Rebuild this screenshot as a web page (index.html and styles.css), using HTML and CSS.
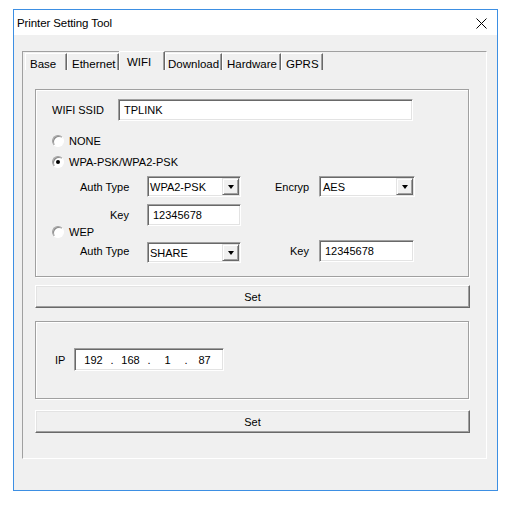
FILE: index.html
```html
<!DOCTYPE html>
<html>
<head>
<meta charset="utf-8">
<title>Printer Setting Tool</title>
<link rel="stylesheet" href="styles.css">
</head>
<body>
<div class="window">
  <div class="titlebar">
    <span class="title">Printer Setting Tool</span>
    <svg class="close" width="11" height="11" viewBox="0 0 11 11"><path d="M0.5 0.5 L10.5 10.5 M10.5 0.5 L0.5 10.5" stroke="#000" stroke-width="1" fill="none"/></svg>
  </div>
  <div class="client">
    <div class="tabctl">
      <div class="tabs">
        <div class="tab w-base">Base</div>
        <div class="tab w-eth">Ethernet</div>
        <div class="tab w-wifi active">WIFI</div>
        <div class="tab w-dl">Download</div>
        <div class="tab w-hw">Hardware</div>
        <div class="tab w-gprs">GPRS</div>
      </div>
      <div class="page">
        <div class="group g1">
          <div class="row r-ssid">
            <span class="lbl l-ssid">WIFI SSID</span>
            <div class="edit e-ssid">TPLINK</div>
          </div>
          <div class="row radio-row r-none">
            <span class="radio"></span><span class="rtext">NONE</span>
          </div>
          <div class="row radio-row r-wpa">
            <span class="radio checked"></span><span class="rtext">WPA-PSK/WPA2-PSK</span>
          </div>
          <div class="row r-auth1">
            <span class="lbl l-auth">Auth Type</span>
            <div class="combo c-left"><span class="ctext">WPA2-PSK</span><span class="dd"><span class="tri"></span></span></div>
            <span class="lbl l-enc">Encryp</span>
            <div class="combo c-right"><span class="ctext">AES</span><span class="dd"><span class="tri"></span></span></div>
          </div>
          <div class="row r-key1">
            <span class="lbl l-key">Key</span>
            <div class="edit e-key">12345678</div>
          </div>
          <div class="row radio-row r-wep">
            <span class="radio"></span><span class="rtext">WEP</span>
          </div>
          <div class="row r-auth2">
            <span class="lbl l-auth">Auth Type</span>
            <div class="combo c-left c-low"><span class="ctext">SHARE</span><span class="dd"><span class="tri"></span></span></div>
            <span class="lbl l-key2">Key</span>
            <div class="edit e-key2">12345678</div>
          </div>
        </div>
        <div class="btn b1">Set</div>
        <div class="group g2">
          <div class="row r-ip">
            <span class="lbl l-ip">IP</span>
            <div class="ipfield">
              <span class="oct">192</span><span class="dot">.</span><span class="oct">168</span><span class="dot">.</span><span class="oct">1</span><span class="dot">.</span><span class="oct">87</span>
            </div>
          </div>
        </div>
        <div class="btn b2">Set</div>
      </div>
    </div>
  </div>
</div>
</body>
</html>
```

FILE: styles.css
```css
html, body {
  margin: 0;
  padding: 0;
  background: #ffffff;
}
body {
  font-family: "Liberation Sans", Arial, sans-serif;
  font-size: 11px;
  color: #000;
}
.window {
  margin: 9px 0 0 13px;
  width: 485px;
  height: 482px;
  box-sizing: border-box;
  border: 1px solid #3d8fe3;
  background: #f0f0f0;
  display: flex;
  flex-direction: column;
}
.titlebar {
  height: 25px;
  flex: none;
  background: #fff;
  display: flex;
  align-items: center;
  justify-content: space-between;
  padding: 0 10px 0 3px;
}
.title {
  font-size: 11.5px;
  letter-spacing: -0.1px;
}
.close {
  display: block;
  margin-top: 1px;
}
.client {
  padding: 16px 0 0 8px;
}
.tabctl {
  width: 465px;
  height: 408px;
  box-sizing: border-box;
  border: 1px solid;
  border-color: #a0a0a0 #ffffff #ffffff #a0a0a0;
}
.tabs {
  display: flex;
  align-items: flex-end;
  height: 17px;
  margin-top: 1px;
  padding-left: 2px;
}
.tab {
  height: 17px;
  box-sizing: border-box;
  border-top: 1px solid #fff;
  border-left: 1px solid #fff;
  border-right: 1px solid #696969;
  box-shadow: inset -1px 0 0 #a0a0a0;
  padding: 3px 0 0 4px;
  line-height: 14px;
  font-size: 11.5px;
  white-space: nowrap;
  overflow: hidden;
}
.tab.active {
  height: 19px;
  padding-left: 7px;
}
.w-base { width: 42px; }
.w-eth { width: 52px; }
.w-wifi { width: 46px; }
.w-dl { width: 57px; padding-left: 2px; }
.w-hw { width: 59px; }
.w-gprs { width: 42px; }
.page {
  padding: 19px 0 0 12px;
}
.group {
  width: 434px;
  box-sizing: border-box;
  border: 1px solid #a0a0a0;
  box-shadow: inset 1px 1px 0 #fff, 1px 1px 0 #fff;
}
.g1 { height: 188px; }
.g2 { height: 78px; margin-top: 13px; }
.row {
  display: flex;
  align-items: center;
}
.lbl { flex: none; white-space: nowrap; }
.edit, .combo, .ipfield {
  box-sizing: border-box;
  background: #fff;
  border: 1px solid;
  border-color: #a0a0a0 #ffffff #ffffff #a0a0a0;
  box-shadow: inset 1px 1px 0 #696969, inset -1px -1px 0 #e3e3e3;
}
.edit {
  height: 22px;
  padding: 3px 0 0 5px;
  line-height: 14px;
}
.r-ssid { margin-top: 9px; height: 22px; padding-left: 16px; }
.l-ssid { width: 66px; }
.e-ssid { width: 295px; }
.radio-row { height: 14px; padding-left: 16px; }
.r-none { margin-top: 13px; }
.r-wpa { margin-top: 7px; }
.r-wep { margin-top: -1px; }
.radio {
  width: 12px;
  height: 12px;
  box-sizing: border-box;
  border-radius: 50%;
  border: 1px solid;
  border-color: #a0a0a0 #ffffff #ffffff #a0a0a0;
  box-shadow: inset 1px 1px 0 #8a8a8a;
  background: #fff;
  position: relative;
  flex: none;
}
.radio.checked::after {
  content: "";
  position: absolute;
  left: 3px;
  top: 3px;
  width: 4px;
  height: 4px;
  border-radius: 50%;
  background: #000;
}
.rtext { margin-left: 5px; }
.r-auth1 { margin-top: 7px; height: 21px; padding-left: 44px; }
.r-key1 { margin-top: 7px; height: 22px; padding-left: 44px; }
.r-auth2 { margin-top: 1px; height: 23px; padding-left: 44px; align-items: flex-start; }
.l-auth { width: 67px; }
.r-auth2 .lbl { line-height: 23px; }
.l-enc { width: 44px; margin-left: 34px; }
.l-key { width: 67px; text-align: right; padding-right: 18px; box-sizing: border-box; }
.l-key2 { width: 44px; margin-left: 34px; text-align: right; padding-right: 10px; box-sizing: border-box; }
.e-key { width: 94px; }
.e-key2 { width: 95px; }
.combo {
  height: 21px;
  display: flex;
  align-items: center;
}
.c-left { width: 94px; }
.c-right { width: 96px; }
.c-low { margin-top: 2px; }
.ctext {
  flex: 1;
  padding-left: 2px;
  white-space: nowrap;
}
.c-right .ctext { padding-left: 3px; }
.dd {
  width: 17px;
  height: 17px;
  margin-right: 1px;
  box-sizing: border-box;
  border: 1px solid;
  border-color: #e3e3e3 #696969 #696969 #e3e3e3;
  box-shadow: inset 1px 1px 0 #fff, inset -1px -1px 0 #a0a0a0;
  background: #f0f0f0;
  display: flex;
  align-items: center;
  justify-content: center;
}
.tri {
  width: 0;
  height: 0;
  border-left: 3.5px solid transparent;
  border-right: 3.5px solid transparent;
  border-top: 4px solid #000;
  margin-top: 1px;
}
.btn {
  width: 435px;
  height: 23px;
  box-sizing: border-box;
  border: 1px solid;
  border-color: #ffffff #696969 #696969 #ffffff;
  box-shadow: inset -1px -1px 0 #a0a0a0, inset 1px 1px 0 #e3e3e3;
  display: flex;
  align-items: center;
  justify-content: center;
}
.b1 { margin-top: 8px; }
.b2 { margin-top: 11px; }
.r-ip { margin-top: 26px; height: 23px; padding-left: 19px; }
.l-ip { width: 19px; }
.ipfield {
  width: 150px;
  height: 23px;
  display: flex;
  align-items: center;
  padding-left: 5px;
}
.oct { width: 27px; text-align: center; }
.dot { width: 10px; text-align: center; }
```
